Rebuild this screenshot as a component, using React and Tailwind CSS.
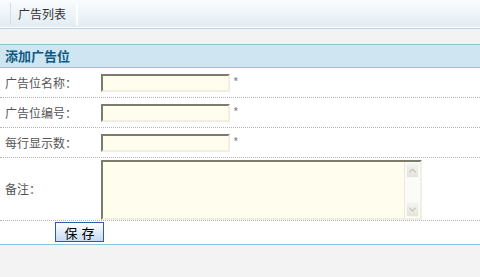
import React from "react";
import { ChevronUp, ChevronDown } from "lucide-react";

const fields = [
  { label: "广告位名称：" },
  { label: "广告位编号：" },
  { label: "每行显示数：" },
];

const inputCls =
  "w-[129px] h-[18px] bg-[#fffdee] border-2 border-t-[#7d7b6c] border-l-[#7d7b6c] border-r-[#f0efe2] border-b-[#f0efe2] outline-none text-xs";

const App = () => {
  return (
    <div
      className="min-h-[277px] bg-[#f3f3f3] text-xs text-[#555]"
      style={{ fontFamily: '"Noto Sans CJK SC", "Liberation Sans", sans-serif' }}
    >
      {/* tab bar */}
      <div className="h-[27px] bg-gradient-to-b from-[#f9fcfe] to-[#e3ecf3] flex items-center pl-[10px]">
        <div className="h-[22px] flex items-center border-l border-l-[#d2dde6] border-r-2 border-r-white pl-[7px] pr-[10px] text-[#333]">
          广告列表
        </div>
      </div>
      <div className="h-px bg-white" />
      <div className="h-px bg-[#bcd5e7]" />

      <div className="h-[15px]" />

      {/* form panel */}
      <div className="bg-white border-t border-t-[#8ec3dc] border-b border-b-[#8ec3dc]">
        <div className="h-[23px] bg-[#cfe5f1] border-b border-b-[#8ec3dc] flex items-center pl-[5px] font-bold text-[13px] text-[#0f5a85]">
          添加广告位
        </div>

        {fields.map((f, i) => (
          <div
            key={i}
            className="h-[30px] flex items-center border-b border-dotted border-b-[#b5b5b5]"
          >
            <div className="w-[101px] pl-[5px]">{f.label}</div>
            <input className={inputCls} />
            <span className="ml-[3px] text-[12px] leading-none text-[#8a7f96] -mt-[2px]">*</span>
          </div>
        ))}

        <div className="h-[63px] flex items-center border-b border-dotted border-b-[#b5b5b5]">
          <div className="w-[101px] pl-[5px]">备注：</div>
          <div className="relative mt-px">
            <textarea className="block w-[321px] h-[60px] bg-[#fffdee] border-2 border-t-[#7d7b6c] border-l-[#7d7b6c] border-r-[#f0efe2] border-b-[#f0efe2] outline-none resize-none overflow-hidden text-xs pr-[18px]" />
            {/* scrollbar */}
            <div className="absolute top-[2px] right-[2px] bottom-[2px] w-[16px] bg-[#fbfbf7] border-l border-l-[#eceae0] flex flex-col justify-between p-px">
              <div className="h-[15px] rounded-[2px] bg-gradient-to-b from-[#f4f4ef] to-[#e4e4dc] border border-[#f7f7f2] flex items-center justify-center">
                <ChevronUp className="w-[11px] h-[11px] text-[#c3c3bb]" strokeWidth={3} />
              </div>
              <div className="h-[15px] rounded-[2px] bg-gradient-to-b from-[#f4f4ef] to-[#e4e4dc] border border-[#f7f7f2] flex items-center justify-center">
                <ChevronDown className="w-[11px] h-[11px] text-[#c3c3bb]" strokeWidth={3} />
              </div>
            </div>
          </div>
        </div>

        <div className="h-[23px] pl-[55px] pt-px">
          <button className="w-[49px] h-[20px] border border-[#2c5ea6] bg-gradient-to-b from-[#ffffff] to-[#c6daf2] text-black text-[13px] leading-none tracking-[4px] pl-[4px]">
            保存
          </button>
        </div>
      </div>
    </div>
  );
};

export default App;
